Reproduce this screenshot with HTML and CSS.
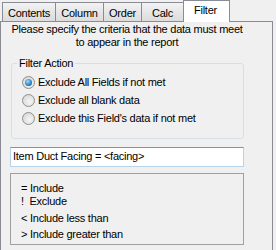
FILE: index.html
```html
<!DOCTYPE html>
<html>
<head>
<meta charset="utf-8">
<link rel="stylesheet" href="styles.css">
</head>
<body>
<div class="dialog">
  <div class="tabs">
    <div class="tab tab-contents">Contents</div>
    <div class="tab tab-column">Column</div>
    <div class="tab tab-order">Order</div>
    <div class="tab tab-calc">Calc</div>
    <div class="tab tab-filter selected">Filter</div>
  </div>
  <div class="panel">
    <div class="intro">Please specify the criteria that the data must meet<br>to appear in the report</div>
    <fieldset class="group">
      <legend>Filter Action</legend>
      <div class="opt"><span class="radio checked"></span><span class="opt-label">Exclude All Fields if not met</span></div>
      <div class="opt"><span class="radio"></span><span class="opt-label">Exclude all blank data</span></div>
      <div class="opt opt-last"><span class="radio"></span><span class="opt-label">Exclude this Field's data if not met</span></div>
    </fieldset>
    <div class="textbox">Item Duct Facing = &lt;facing&gt;</div>
    <div class="legendbox">
      <div class="l1">= Include</div>
      <div class="l2">!&nbsp; Exclude</div>
      <div class="l3">&lt; Include less than</div>
      <div class="l4">&gt; Include greater than</div>
    </div>
  </div>
</div>
</body>
</html>
```
FILE: styles.css
```css
html, body {
  margin: 0;
  padding: 0;
  background: #f0f0f0;
}
body {
  font-family: "Liberation Sans", Arial, sans-serif;
  font-size: 11px;
  letter-spacing: -0.25px;
  line-height: 13px;
  color: #000;
  width: 276px;
  height: 250px;
  overflow: hidden;
}
.tabs {
  display: flex;
  align-items: flex-end;
  height: 21px;
  padding-left: 2px;
}
.tab {
  box-sizing: border-box;
  height: 19px;
  border: 1px solid #898c95;
  border-bottom: none;
  background: linear-gradient(#f3f3f3, #e6e6e6 50%, #dcdcdc);
  text-align: center;
  line-height: 18px;
  padding-top: 1px;
}
.tab-contents { width: 54px; }
.tab-column { width: 49px; margin-left: -1px; }
.tab-order { width: 39px; margin-left: -1px; }
.tab-calc { width: 43px; margin-left: -1px; }
.tab.selected {
  width: 47px;
  height: 22px;
  margin-left: -1px;
  margin-bottom: -1px;
  background: #fff;
  position: relative;
  z-index: 1;
  line-height: 17px;
  padding-top: 1px;
  padding-right: 2px;
}
.panel {
  box-sizing: border-box;
  width: 273px;
  height: 240px;
  border: 1px solid #898c95;
  padding: 0 9px;
  background: #f0f0f0;
}
.intro {
  width: 234px;
  text-align: center;
  margin-top: 1px;
  white-space: nowrap;
}
.group {
  box-sizing: border-box;
  width: 233px;
  margin: 8px 0 0 1px;
  padding: 3px 0 10px 10px;
  border: 1px solid #d5dfe5;
  border-radius: 3px;
}
.group legend {
  padding: 0 2px;
  margin-left: -5px;
  line-height: 13px;
}
.opt {
  display: flex;
  align-items: center;
  height: 18px;
}
.opt-last { height: 19px; }
.radio {
  box-sizing: border-box;
  width: 13px;
  height: 13px;
  border-radius: 50%;
  border: 1px solid #8e8f8f;
  background: radial-gradient(circle at 60% 60%, #f6f6f6, #dcdcdc 70%, #cfcfcf);
  margin-right: 3px;
  display: flex;
  align-items: center;
  justify-content: center;
}
.radio.checked::after {
  content: "";
  width: 7px;
  height: 7px;
  border-radius: 50%;
  background: radial-gradient(circle at 40% 35%, #9bdcff, #2c7fc0 60%, #15456f);
}
.textbox {
  box-sizing: border-box;
  width: 234px;
  height: 20px;
  margin-top: 8px;
  background: #fff;
  border: 1px solid #b7d3ea;
  border-top-color: #569de5;
  padding-left: 2px;
  line-height: 17px;
}
.legendbox {
  box-sizing: border-box;
  width: 234px;
  margin-top: 6px;
  border: 1px solid #a0a0a0;
  padding: 8px 0 3px 10px;
}
.l3 { margin-top: 4px; }
.l4 { margin-top: 3px; }
```
